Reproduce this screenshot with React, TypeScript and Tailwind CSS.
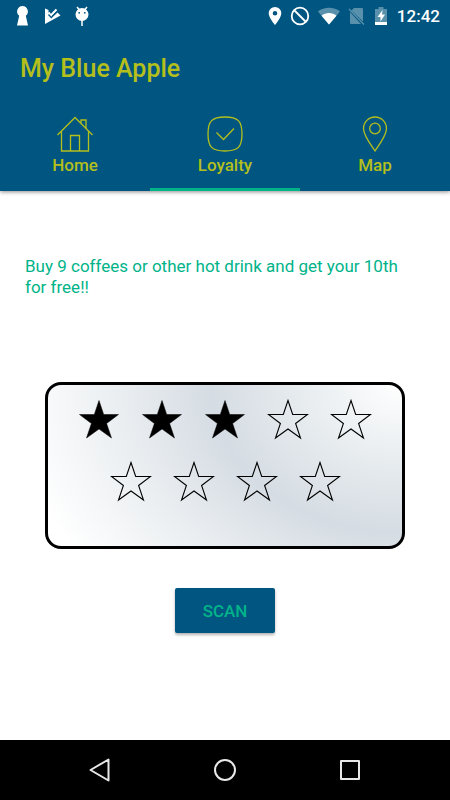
import type { ReactNode } from "react";

const STAR_POINTS = "21,1.5 25.7,15.5 40.5,15.5 28.6,24.5 33.5,39 21,30 8.5,39 13.4,24.5 1.5,15.5 16.3,15.5";

function Star({ filled }: { filled: boolean }) {
  return (
    <svg viewBox="0 0 42 42" className="size-[42px]" role="img" aria-label={filled ? "Collected" : "Not collected"}>
      <polygon points={STAR_POINTS} fill={filled ? "#000" : "none"} stroke="#000" strokeWidth={filled ? 0.5 : 1.1} />
    </svg>
  );
}

function StatusBar() {
  return (
    <div className="flex h-8 items-center justify-between pr-2.5 pl-[15px] text-white">
      <div className="flex items-center gap-3.5">
        <svg viewBox="0 0 15 22" className="h-[22px] w-[15px]" fill="currentColor">
          <path d="M7.5 1a5.5 5.5 0 0 0-3.3 9.8L2 20.5h11l-2.2-9.7A5.5 5.5 0 0 0 7.5 1z" />
        </svg>
        <svg viewBox="0 0 17 22" className="h-[22px] w-[17px]" fill="currentColor">
          <path d="M1 3.5 4.5 5v3L8 12l5.5-4.5 3 3L1 19z" />
          <path d="M4.5 7.5 7 10.3l5.5-5.8" fill="none" stroke="currentColor" strokeWidth="2" />
          <path d="m4.5 9.5 2.8 3.1L13 6.8" fill="none" stroke="#005681" strokeWidth="1.3" />
        </svg>
        <svg viewBox="0 0 14 22" className="h-[22px] w-[14px]" fill="currentColor">
          <path d="M2 2l2.5 3M12 2 9.5 5M7 15v6" stroke="currentColor" strokeWidth="1.5" />
          <circle cx="7" cy="9.5" r="6.5" />
          <circle cx="4.2" cy="7.8" r=".9" fill="#005681" />
          <circle cx="9.8" cy="7.8" r=".9" fill="#005681" />
        </svg>
      </div>
      <div className="flex items-center">
        <svg viewBox="0 0 14 20" className="mr-2 h-5 w-3.5" fill="currentColor">
          <path
            fillRule="evenodd"
            d="M7 1A6.3 6.3 0 0 0 .7 7.3C.7 12 7 19 7 19s6.3-7 6.3-11.7A6.3 6.3 0 0 0 7 1zm0 4a2.3 2.3 0 1 1 0 4.6A2.3 2.3 0 0 1 7 5z"
          />
        </svg>
        <svg viewBox="0 0 20 20" className="mr-2 size-5" fill="none" stroke="currentColor" strokeWidth="1.8">
          <circle cx="10" cy="10" r="8.3" />
          <path d="M4 4l12 12" />
        </svg>
        <svg viewBox="0 0 22 18" className="mr-2 h-[18px] w-[22px]" fill="currentColor">
          <path d="M11 17.5 0 4.5C6-.5 16-.5 22 4.5z" opacity=".35" />
          <path d="M11 17.5 3.5 8.7c4-3.5 11-3.5 15 0z" />
        </svg>
        <svg viewBox="0 0 17 20" className="mr-2.5 h-5 w-[17px]">
          <path d="M6 2h8a1 1 0 0 1 1 1v12.5L3.5 4.5zM2 6l11 12H3a1 1 0 0 1-1-1z" fill="#fff" opacity=".35" />
          <path d="M1 3l15 15.5" stroke="#fff" strokeWidth="1.3" opacity=".35" />
        </svg>
        <svg viewBox="0 0 12 20" className="mr-2.5 h-5 w-3" fill="currentColor">
          <path d="M0 3h3.5V1h5v2H12v13H0z" opacity=".35" />
          <path d="M0 16h12v3H0zM7.5 4l-5 7h3v4.5L10 8.5H7z" />
        </svg>
        <span className="text-[17px] leading-5 font-medium">12:42</span>
      </div>
    </div>
  );
}

function HomeIcon() {
  return (
    <svg viewBox="0 0 36 36" className="size-9" fill="none" stroke="currentColor" strokeWidth="1.3">
      <path d="M.5 19 18 1.5 35.5 19M4.5 15v20h27V15M13.5 35V19.5h9V35M24 7.5V4h5v8.5" />
    </svg>
  );
}

function LoyaltyIcon() {
  return (
    <svg viewBox="0 0 36 36" className="size-9" fill="none" stroke="currentColor" strokeWidth="1.3">
      <path d="M18 1C5 1 1 5 1 18s4 17 17 17 17-4 17-17S31 1 18 1z" />
      <path d="m9.5 16.5 7 7L27 12.5" />
    </svg>
  );
}

function MapIcon() {
  return (
    <svg viewBox="0 0 36 36" className="size-9" fill="none" stroke="currentColor" strokeWidth="1.3">
      <path d="M18 35C14 29 6.5 19.5 6.5 12.5a11.5 11.5 0 0 1 23 0C29.5 19.5 22 29 18 35z" />
      <circle cx="18" cy="12.5" r="5.3" />
    </svg>
  );
}

interface TabProps {
  label: string;
  icon: ReactNode;
  active?: boolean;
}

function Tab({ label, icon, active = false }: TabProps) {
  return (
    <button
      type="button"
      role="tab"
      aria-selected={active}
      className={`flex flex-1 flex-col items-center border-b-3 pt-3 pb-2.5 ${active ? "border-[#00b389]" : "border-transparent"}`}
    >
      {icon}
      <span className="text-[17px] leading-[26px] font-medium">{label}</span>
    </button>
  );
}

export default function App() {
  return (
    <div className="flex min-h-screen flex-col bg-white font-['Roboto',sans-serif]">
      <header className="bg-[#005681] text-[#b4bf1c] shadow-[0_1px_4px_rgba(0,0,0,0.45)]">
        <StatusBar />
        <h1 className="px-5 pt-[21px] pb-[19px] text-[25px] leading-8 font-medium">My Blue Apple</h1>
        <div role="tablist" className="flex">
          <Tab label="Home" icon={<HomeIcon />} />
          <Tab label="Loyalty" icon={<LoyaltyIcon />} active />
          <Tab label="Map" icon={<MapIcon />} />
        </div>
      </header>

      <main className="flex flex-1 flex-col items-center">
        <p className="w-full pt-[65px] pr-[45px] pl-[25px] text-[17px] leading-[21px] text-[#00b389]">
          Buy 9 coffees or other hot drink and get your 10th for free!!
        </p>
        <div className="mt-[84px] w-full px-[45px]">
          <div className="flex flex-col gap-5 rounded-2xl border-3 border-black bg-[radial-gradient(54%_92%_at_100%_0%,#fff_0%,#e6ebee_55%,#d5dce3_100%,#e9edf0_145%,#fff_205%)] pt-[14px] pb-[43px]">
            <div className="flex justify-center gap-[21px]">
              {[1, 2, 3, 4, 5].map((n) => (
                <Star key={n} filled={n <= 3} />
              ))}
            </div>
            <div className="flex justify-center gap-[21px]">
              {[6, 7, 8, 9].map((n) => (
                <Star key={n} filled={false} />
              ))}
            </div>
          </div>
        </div>
        <button
          type="button"
          className="mt-[39px] h-[45px] w-[100px] rounded-xs bg-[#005681] pt-0.5 text-[17px] font-medium text-[#00b389] shadow-[0_2px_3px_rgba(0,0,0,0.3)]"
        >
          SCAN
        </button>
      </main>

      <nav className="flex h-15 items-center justify-center gap-[101px] bg-black text-[#e8e8e8]">
        <button type="button" aria-label="Back">
          <svg viewBox="0 0 24 24" className="size-6" fill="none" stroke="currentColor" strokeWidth="2" strokeLinejoin="round">
            <path d="M2.5 12l18-10.5v21z" />
          </svg>
        </button>
        <button type="button" aria-label="Home screen">
          <svg viewBox="0 0 24 24" className="size-6" fill="none" stroke="currentColor" strokeWidth="2">
            <circle cx="12" cy="12" r="10" />
          </svg>
        </button>
        <button type="button" aria-label="Recent apps">
          <svg viewBox="0 0 24 24" className="size-6" fill="none" stroke="currentColor" strokeWidth="2" strokeLinejoin="round">
            <path d="M3 3h18v18H3z" />
          </svg>
        </button>
      </nav>
    </div>
  );
}
